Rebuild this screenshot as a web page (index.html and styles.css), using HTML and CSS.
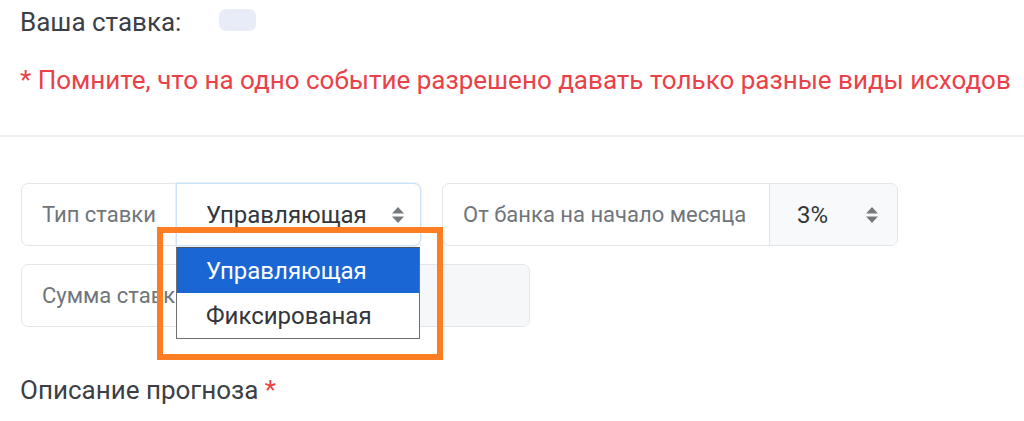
FILE: index.html
```html
<!DOCTYPE html>
<html lang="ru">
<head>
<meta charset="utf-8">
<link rel="stylesheet" href="styles.css">
</head>
<body>
<div class="page">
  <div class="top">
    <div class="stake-line">
      <span class="stake-label">Ваша ставка:</span>
      <span class="stake-pill"></span>
    </div>
    <div class="warning">* Помните, что на одно событие разрешено давать только разные виды исходов</div>
  </div>
  <div class="divider"></div>
  <div class="form">
    <div class="row">
      <div class="group g1">
        <div class="label">Тип ставки</div>
        <div class="select focus">
          <span>Управляющая</span>
          <svg class="arrows" width="14" height="18" viewBox="0 0 14 18"><path d="M7 1 L13 7.5 H1 Z M7 17 L13 10.5 H1 Z" fill="#74797e"/></svg>
        </div>
      </div>
      <div class="group g2">
        <div class="label">От банка на начало месяца</div>
        <div class="select value">
          <span>3%</span>
          <svg class="arrows" width="14" height="18" viewBox="0 0 14 18"><path d="M7 1 L13 7.5 H1 Z M7 17 L13 10.5 H1 Z" fill="#74797e"/></svg>
        </div>
      </div>
    </div>
    <div class="row">
      <div class="group g3">
        <div class="label">Сумма ставки</div>
        <div class="input"></div>
      </div>
    </div>
    <div class="desc">Описание прогноза <span class="req">*</span></div>

    <div class="dropdown">
      <div class="opt sel">Управляющая</div>
      <div class="opt">Фиксированая</div>
    </div>
    <div class="highlight"></div>
  </div>
</div>
</body>
</html>
```

FILE: styles.css
```css
* { box-sizing: border-box; }
html, body { margin: 0; padding: 0; background: #fff; }
body {
  font-family: Roboto, "Liberation Sans", Arial, sans-serif;
  color: #3b4046;
  width: 1024px;
  height: 421px;
  overflow: hidden;
}
.page { padding: 0 0 0 20px; }
.top { padding-top: 7px; }
.stake-line {
  display: flex;
  align-items: center;
  height: 30px;
}
.stake-label { font-size: 26px; line-height: 30px; }
.stake-pill {
  display: inline-block;
  width: 37px;
  height: 22px;
  border-radius: 7px;
  background: #e8ebf8;
  margin-left: 38px;
  margin-top: -4px;
}
.warning {
  margin-top: 28px;
  font-size: 26px;
  line-height: 30px;
  color: #ea4148;
  white-space: nowrap;
}
.divider {
  margin: 40px 0 0 -20px;
  height: 2px;
  background: #f0f0f0;
}
.form {
  position: relative;
  padding-top: 46px;
}
.row {
  display: flex;
  gap: 21px;
  margin-left: 1px;
  margin-bottom: 18px;
}
.group {
  display: flex;
  height: 63px;
  border: 1px solid #e3e5e8;
  border-radius: 7px;
}
.label {
  display: flex;
  align-items: center;
  padding: 0 20px;
  font-size: 22px;
  color: #6f757b;
  white-space: nowrap;
}
.g1 .label { width: 154px; }
.g1 .select { width: 245px; }
.select {
  display: flex;
  align-items: center;
  justify-content: space-between;
  font-size: 24px;
  color: #32363b;
  border-left: 1px solid #e3e5e8;
}
.select.focus {
  border: 1px solid #cfe3f8;
  border-radius: 0 7px 7px 0;
  margin: -1px -1px -1px 0;
  padding: 0 15px 0 29px;
  box-shadow: 0 0 0 1px #e6f1fc;
}
.g2 .label { width: 326px; }
.select.value {
  width: 128px;
  background: #f8f9fa;
  border-radius: 0 7px 7px 0;
  padding: 0 18px 0 27px;
}
.g3 { width: 509px; }
.g3 .label { width: 200px; }
.input {
  flex: 1;
  background: #f6f7f9;
  border-left: 1px solid #e3e5e8;
  border-radius: 0 7px 7px 0;
}
.desc {
  margin-top: 48px;
  font-size: 26px;
  line-height: 30px;
}
.req { color: #ea4148; }
.dropdown {
  position: absolute;
  left: 156px;
  top: 110px;
  width: 244px;
  background: #fff;
  border: 1px solid #6d6f73;
  border-top-color: #50555a;
}
.opt {
  height: 45px;
  display: flex;
  align-items: center;
  padding-left: 29px;
  font-size: 24px;
  color: #32363b;
}
.opt.sel { background: #1a66d4; color: #fff; }
.highlight {
  position: absolute;
  left: 137px;
  top: 90px;
  width: 286px;
  height: 133px;
  border: 6px solid #fc7d22;
}
```
